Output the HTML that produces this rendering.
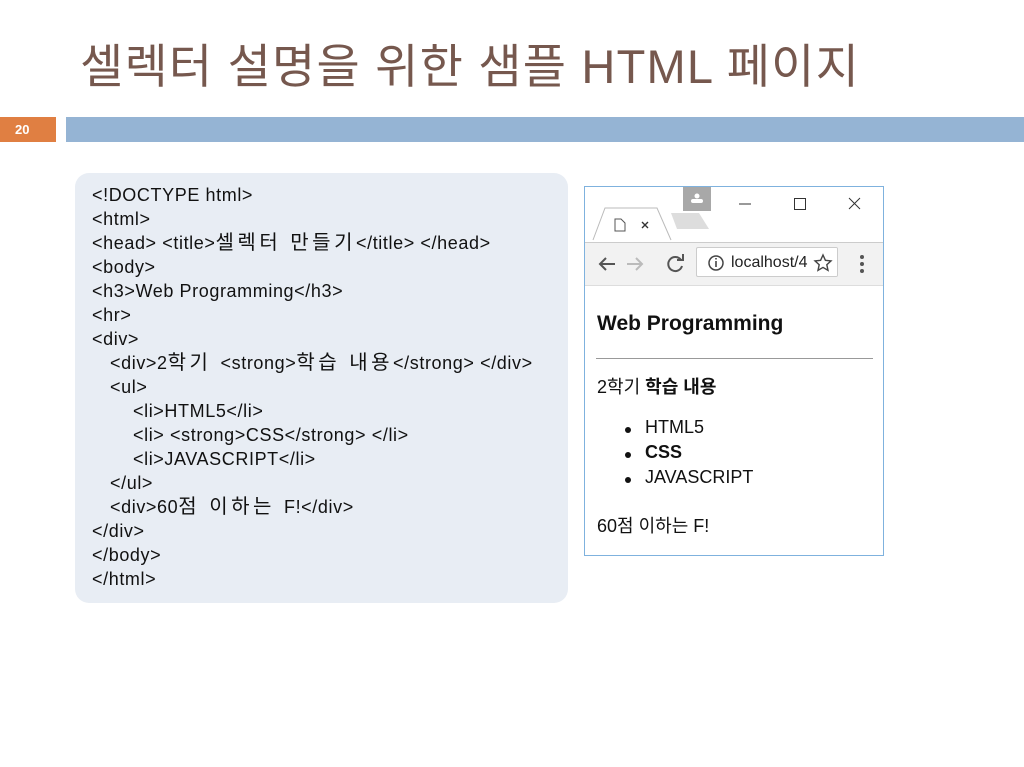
<!DOCTYPE html>
<html><head><meta charset="utf-8"><style>
body{margin:0;width:1024px;height:767px;background:#fff;position:relative;overflow:hidden;font-family:"Liberation Sans","Noto Sans CJK KR",sans-serif}
.t{position:absolute;left:80px;top:28px;font-size:47px;color:#76584e;letter-spacing:1.2px;white-space:nowrap}
.num{position:absolute;left:0;top:117px;width:56px;height:25px;background:#e07f42;color:#fff;font-size:13px;font-weight:bold;line-height:25px;padding-left:15px;box-sizing:border-box}
.bar{position:absolute;left:66px;top:117px;width:958px;height:25px;background:#95b4d4}
.code{position:absolute;left:75px;top:173px;width:493px;height:430px;background:#e8edf4;border-radius:14px;font-size:18px;letter-spacing:0.6px;line-height:24px;color:#111;padding:10px 0 0 17px;box-sizing:border-box;white-space:pre}
.code .k{font-size:20px;letter-spacing:3.5px;line-height:0}
.i1{display:inline-block;width:18px}.i2{display:inline-block;width:41px}
.br{position:absolute;left:584px;top:186px;width:300px;height:370px;border:1px solid #7fb2de;box-sizing:border-box;background:#fff}
.tabs{position:absolute;left:0;top:0;width:298px;height:55px;background:#fff}
.nav{position:absolute;left:0;top:55px;width:298px;height:42px;background:#f2f2f2;border-top:1px solid #ccc;border-bottom:1px solid #ddd}
.url{position:absolute;left:111px;top:4px;width:142px;height:30px;background:#fff;border:1px solid #ccc;border-radius:2px;font-size:16px;line-height:30px;box-sizing:border-box;padding-left:34px;color:#222;overflow:hidden}
.pg{position:absolute;left:12px;font-size:18px;color:#111;white-space:nowrap}
</style></head><body>
<div class="t">셀렉터 설명을 위한 샘플 HTML 페이지</div>
<div class="num">20</div><div class="bar"></div>
<div class="code">&lt;!DOCTYPE html&gt;
&lt;html&gt;
&lt;head&gt; &lt;title&gt;<span class="k">셀렉터 만들기</span>&lt;/title&gt; &lt;/head&gt;
&lt;body&gt;
&lt;h3&gt;Web Programming&lt;/h3&gt;
&lt;hr&gt;
&lt;div&gt;
<span class="i1"></span>&lt;div&gt;2<span class="k">학기 </span>&lt;strong&gt;<span class="k">학습 내용</span>&lt;/strong&gt; &lt;/div&gt;
<span class="i1"></span>&lt;ul&gt;
<span class="i2"></span>&lt;li&gt;HTML5&lt;/li&gt;
<span class="i2"></span>&lt;li&gt; &lt;strong&gt;CSS&lt;/strong&gt; &lt;/li&gt;
<span class="i2"></span>&lt;li&gt;JAVASCRIPT&lt;/li&gt;
<span class="i1"></span>&lt;/ul&gt;
<span class="i1"></span>&lt;div&gt;60<span class="k">점 이하는 </span>F!&lt;/div&gt;
&lt;/div&gt;
&lt;/body&gt;
&lt;/html&gt;</div>
<div class="br">
 <div class="tabs">
  <div style="position:absolute;left:98px;top:0;width:28px;height:24px;background:#a8a8a8"></div>
  <svg width="298" height="55" style="position:absolute;left:0;top:0">
   <circle cx="112" cy="9" r="2.5" fill="#fff"/><rect x="106" y="12" width="12" height="4" rx="2" fill="#fff"/>
   <path d="M8 53 L20 21 H72 L86 53" fill="#fff" stroke="#bbb"/>
   <path d="M30 32v12h10V36l-4-4z" fill="none" stroke="#555"/>
   <path d="M57 35l6 6M63 35l-6 6" stroke="#333" stroke-width="1.4"/>
   <path d="M86 26h28l10 16h-32z" fill="#ddd"/>
   <path d="M154 17h12" stroke="#333"/>
   <rect x="209.5" y="11.5" width="11" height="11" fill="none" stroke="#333"/>
   <path d="M264 11l11 11M275 11l-11 11" stroke="#333"/>
  </svg>
 </div>
 <div class="nav">
  <svg width="298" height="42" style="position:absolute;left:0;top:0">
   <path d="M30 21H15M21 15l-6 6 6 6" fill="none" stroke="#555" stroke-width="2"/>
   <path d="M42 21h15M51 15l6 6-6 6" fill="none" stroke="#bbb" stroke-width="2"/>
   <path d="M96 17a7 7 0 1 0 1 6" fill="none" stroke="#555" stroke-width="2"/><path d="M92 17h6v-6" fill="none" stroke="#555" stroke-width="2"/>
   <circle cx="277" cy="14" r="2" fill="#555"/><circle cx="277" cy="21" r="2" fill="#555"/><circle cx="277" cy="28" r="2" fill="#555"/>
  </svg>
  <div class="url">localhost/4
   <svg width="142" height="30" style="position:absolute;left:0;top:0"><circle cx="19" cy="15" r="7" fill="none" stroke="#444" stroke-width="1.5"/><path d="M19 13v6M19 10v1.5" stroke="#444" stroke-width="1.6"/>
   <rect x="116" y="0" width="26" height="30" fill="#fff"/>
   <path d="M126 7l2.4 5.3 5.6.6-4.2 3.8 1.2 5.6-5-2.9-5 2.9 1.2-5.6-4.2-3.8 5.6-.6z" fill="none" stroke="#444" stroke-width="1.4"/></svg>
  </div>
 </div>
 <div class="pg" style="top:125px;font-size:21px;font-weight:bold">Web Programming</div>
 <div style="position:absolute;left:11px;top:171px;width:277px;height:1px;background:#999"></div>
 <div class="pg" style="top:186px">2학기 <b>학습 내용</b></div>
 <div class="pg" style="top:230px;left:60px">HTML5</div>
 <div class="pg" style="top:255px;left:60px;font-weight:bold">CSS</div>
 <div class="pg" style="top:280px;left:60px">JAVASCRIPT</div>
 <div style="position:absolute;left:40px;top:240px;width:6px;height:6px;border-radius:3px;background:#111"></div>
 <div style="position:absolute;left:40px;top:265px;width:6px;height:6px;border-radius:3px;background:#111"></div>
 <div style="position:absolute;left:40px;top:290px;width:6px;height:6px;border-radius:3px;background:#111"></div>
 <div class="pg" style="top:325px">60점 이하는 F!</div>
</div>
</body></html>
